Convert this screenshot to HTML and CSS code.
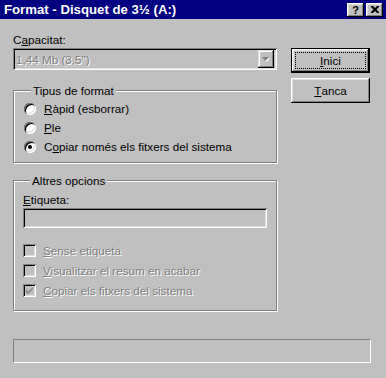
FILE: index.html
```html
<!DOCTYPE html>
<html>
<head>
  <link rel="stylesheet" href="styles.css">
</head>
<body>
<div class="dialog">
  <div class="titlebar">
    <span class="title">Format - Disquet de 3½ (A:)</span>
    <div class="caption-buttons">
      <span class="cap-btn help">?</span>
      <span class="cap-btn close">
        <svg width="8" height="7" viewBox="0 0 8 7">
          <path d="M0 0h2l2 2 2-2h2v1l-2.5 2.5 2.5 2.5v1h-2l-2-2-2 2h-2v-1l2.5-2.5-2.5-2.5z" fill="#000"/>
        </svg>
      </span>
    </div>
  </div>

  <div class="content">
    <div class="main">
      <div class="left">
        <div class="field-label">C<u>a</u>pacitat:</div>
        <div class="combo">
          <span class="combo-text disabled">1,44 Mb (3,5")</span>
          <span class="combo-arrow">
            <svg width="8" height="5" viewBox="0 0 8 5">
              <path d="M1 1h7l-3.5 4z" fill="#fff"/>
              <path d="M0 0h7l-3.5 4z" fill="#808080"/>
            </svg>
          </span>
        </div>

        <fieldset class="group format-type">
          <legend>Tipus de format</legend>
          <div class="option"><span class="radio"></span><span><u>R</u>àpid (esborrar)</span></div>
          <div class="option"><span class="radio"></span><span><u>P</u>le</span></div>
          <div class="option"><span class="radio checked"></span><span>C<u>o</u>piar només els fitxers del sistema</span></div>
        </fieldset>

        <fieldset class="group other-options">
          <legend>Altres opcions</legend>
          <div class="field-label"><u>E</u>tiqueta:</div>
          <div class="textbox"></div>
          <div class="checks">
            <div class="option"><span class="checkbox"></span><span class="disabled"><u>S</u>ense etiqueta</span></div>
            <div class="option"><span class="checkbox"></span><span class="disabled"><u>V</u>isualitzar el resum en acabar</span></div>
            <div class="option">
              <span class="checkbox">
                <svg width="7" height="7" viewBox="0 0 7 7">
                  <path d="M0 2v3l2 2 5-5v-2l-5 5z" fill="#808080"/>
                </svg>
              </span>
              <span class="disabled"><u>C</u>opiar els fitxers del sistema</span>
            </div>
          </div>
        </fieldset>
      </div>

      <div class="buttons">
        <button class="btn default"><span class="focus"><u>I</u>nici</span></button>
        <button class="btn"><u>T</u>anca</button>
      </div>
    </div>

    <div class="status"></div>
  </div>
</div>
</body>
</html>
```

FILE: styles.css
```css
html, body {
  margin: 0;
  padding: 0;
  background: #c0c0c0;
}

.dialog {
  width: 386px;
  height: 378px;
  background: #c0c0c0;
  font-family: "Liberation Sans", Arial, sans-serif;
  font-size: 11.7px;
  color: #000;
  overflow: hidden;
}

u {
  text-decoration: underline;
  text-underline-offset: 1px;
}

.titlebar {
  height: 19px;
  background: #000080;
  display: flex;
  align-items: center;
  justify-content: space-between;
  padding: 0 3px 0 4px;
}

.title {
  color: #fff;
  font-weight: bold;
  font-size: 13.2px;
}

.caption-buttons {
  display: flex;
  gap: 2px;
}

.cap-btn {
  width: 17px;
  height: 14px;
  box-sizing: border-box;
  background: #c0c0c0;
  box-shadow: inset -1px -1px 0 #000, inset 1px 1px 0 #fff, inset -2px -2px 0 #808080, inset 2px 2px 0 #dfdfdf;
  display: flex;
  align-items: center;
  justify-content: center;
  font-weight: bold;
  font-size: 11px;
  line-height: 14px;
}

.content {
  padding: 14px 16px 0 13px;
}

.main {
  display: flex;
  gap: 14px;
}

.left {
  width: 264px;
}

.field-label {
  line-height: 14px;
}

.combo {
  margin-top: 1px;
  height: 22px;
  box-sizing: border-box;
  padding: 2px;
  display: flex;
  align-items: center;
  box-shadow: inset 1px 1px 0 #808080, inset -1px -1px 0 #fff, inset 2px 2px 0 #000, inset -2px -2px 0 #dfdfdf;
}

.combo-text {
  flex: 1;
  padding-left: 1px;
}

.combo-arrow {
  width: 16px;
  height: 18px;
  margin-right: 1px;
  display: flex;
  align-items: center;
  justify-content: center;
  box-shadow: inset -1px -1px 0 #000, inset 1px 1px 0 #dfdfdf, inset -2px -2px 0 #808080, inset 2px 2px 0 #fff;
}

.disabled {
  color: #808080;
  text-shadow: 1px 1px 0 #fff;
}

.group {
  margin: 0;
  padding: 0;
  border: 1px solid #808080;
  box-shadow: inset 1px 1px 0 #fff, 1px 1px 0 #fff;
}

.group legend {
  margin-left: 7px;
  padding: 0 2px;
  line-height: 13px;
  background: #c0c0c0;
}

.format-type {
  margin-top: 14px;
  height: 79px;
  padding: 2px 0 0 10px;
  box-sizing: border-box;
}

.option {
  display: flex;
  align-items: center;
  height: 19px;
  gap: 8px;
}

.radio {
  width: 12px;
  height: 12px;
  border-radius: 50%;
  background: #fff;
  box-shadow: inset 1px 1px 0 #808080, inset -1px -1px 0 #fff, inset 2px 2px 0 #000, inset -2px -2px 0 #dfdfdf;
  display: flex;
  align-items: center;
  justify-content: center;
}

.radio.checked::after {
  content: "";
  width: 4px;
  height: 4px;
  border-radius: 50%;
  background: #000;
}

.other-options {
  margin-top: 11px;
  height: 137px;
  padding: 6px 9px 0 9px;
  box-sizing: border-box;
}

.textbox {
  height: 20px;
  margin-top: 1px;
  box-shadow: inset 1px 1px 0 #808080, inset -1px -1px 0 #fff, inset 2px 2px 0 #000, inset -2px -2px 0 #dfdfdf;
}

.checks {
  margin-top: 12px;
}

.checks .option {
  height: 20px;
  gap: 7px;
}

.checkbox {
  width: 13px;
  height: 13px;
  background: #c0c0c0;
  box-shadow: inset 1px 1px 0 #808080, inset -1px -1px 0 #fff, inset 2px 2px 0 #000, inset -2px -2px 0 #dfdfdf;
  display: flex;
  align-items: center;
  justify-content: center;
}

.buttons {
  margin-top: 15px;
  display: flex;
  flex-direction: column;
  gap: 5px;
}

.btn {
  width: 79px;
  height: 25px;
  margin: 0;
  padding: 0;
  border: none;
  background: #c0c0c0;
  font-family: inherit;
  font-size: 11.7px;
  color: #000;
  box-shadow: inset -1px -1px 0 #000, inset 1px 1px 0 #fff, inset -2px -2px 0 #808080, inset 2px 2px 0 #dfdfdf;
  display: flex;
  align-items: center;
  justify-content: center;
}

.btn.default {
  border: 1px solid #000;
  box-shadow: inset -1px -1px 0 #000, inset 1px 1px 0 #fff, inset -2px -2px 0 #808080, inset 2px 2px 0 #dfdfdf;
  padding: 3px;
}

.focus {
  flex: 1;
  align-self: stretch;
  border: 1px dotted #000;
  display: flex;
  align-items: center;
  justify-content: center;
}

.status {
  margin-top: 28px;
  width: 358px;
  height: 24px;
  box-sizing: border-box;
  border-top: 1px solid #808080;
  border-left: 1px solid #808080;
  border-right: 1px solid #fff;
  border-bottom: 1px solid #fff;
}
```
